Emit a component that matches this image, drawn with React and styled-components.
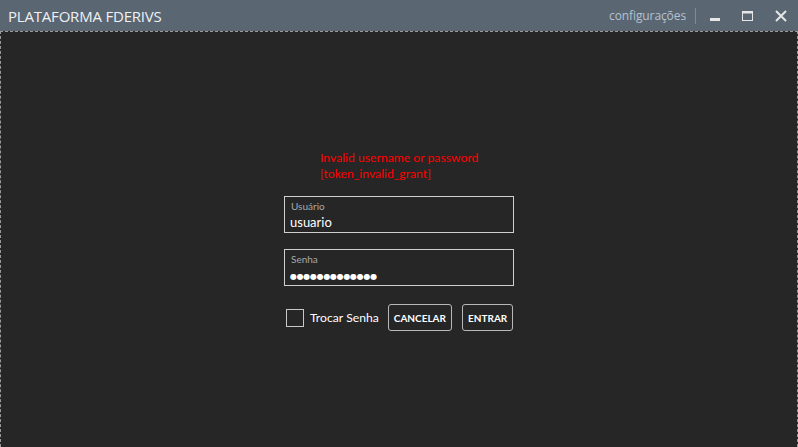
import React from "react";
import styled, { createGlobalStyle } from "styled-components";

const Global = createGlobalStyle`
  html, body { margin: 0; padding: 0; background: #262626; }
  body { font-family: "Open Sans", "Noto Sans", sans-serif; }
  * { box-sizing: border-box; }
`;

const Window = styled.div`
  width: 798px;
  height: 447px;
  display: flex;
  flex-direction: column;
  background: #262626;
`;

const TitleBar = styled.div`
  height: 31px;
  flex: none;
  background: #5a6672;
  display: flex;
  align-items: center;
  padding: 0 1px 0 8px;
`;

const Title = styled.div`
  color: #eef0f2;
  font-size: 15px;
  letter-spacing: -0.2px;
  flex: 1;
`;

const Settings = styled.div`
  color: #b4c2d0;
  font-size: 12px;
  padding-right: 9px;
  letter-spacing: -0.1px;
`;

const Sep = styled.div`
  width: 1px;
  height: 16px;
  background: #808c98;
  margin-right: 2px;
`;

const Ctrl = styled.div`
  width: 33px;
  height: 31px;
  display: flex;
  align-items: center;
  justify-content: center;
`;

const Body = styled.div`
  flex: 1;
  border: 1px dashed #9a9a9a;
  border-bottom: none;
  display: flex;
  flex-direction: column;
  align-items: center;
  padding-top: 118px;
  font-family: "Lato", "Open Sans", sans-serif;
`;

const Form = styled.div`
  width: 230px;
  display: flex;
  flex-direction: column;
`;

const Error = styled.div`
  color: #ff0000;
  font-size: 12.2px;
  line-height: 16px;
  padding-left: 36px;
  margin-bottom: 14px;
`;

const Field = styled.div`
  height: 37px;
  border: 1px solid #cfcfcf;
  padding: 3px 6px 0 6px;
  margin-bottom: 16px;
  display: flex;
  flex-direction: column;
`;

const Label = styled.div`
  color: #a8a8a8;
  font-size: 10px;
  line-height: 12px;
`;

const Value = styled.div`
  color: #ffffff;
  font-size: 13px;
  line-height: 17px;
  margin-top: 2px;
  margin-left: -1px;
`;

const Dots = styled.div`
  color: #ffffff;
  font-size: 8px;
  line-height: 17px;
  letter-spacing: -0.3px;
  margin-left: -1px;
  margin-top: 3px;
  font-family: "DejaVu Sans", sans-serif;
`;

const Actions = styled.div`
  display: flex;
  align-items: center;
  padding-left: 2px;
  margin-top: 2px;
`;

const Check = styled.div`
  width: 18px;
  height: 18px;
  flex: none;
  border: 1px solid #c8c8c8;
  margin-right: 6px;
`;

const CheckLabel = styled.div`
  color: #ffffff;
  font-size: 12.2px;
  white-space: nowrap;
  flex: none;
  margin-right: 9px;
`;

const Button = styled.div`
  height: 27px;
  padding: 0 5px;
  flex: none;
  border: 1px solid #b8b8b8;
  border-radius: 3px;
  color: #ffffff;
  font-size: 10px;
  font-weight: 700;
  display: flex;
  align-items: center;
  white-space: nowrap;
  margin-right: ${(p) => p.$mr || 0}px;
`;

export default function App() {
  return (
    <Window>
      <Global />
      <TitleBar>
        <Title>PLATAFORMA FDERIVS</Title>
        <Settings>configurações</Settings>
        <Sep />
        <Ctrl>
          <svg width="10" height="10" viewBox="0 0 10 10">
            <rect x="0" y="7" width="10" height="3" fill="#e6e6e6" />
          </svg>
        </Ctrl>
        <Ctrl>
          <svg width="11" height="10" viewBox="0 0 11 10">
            <rect x="0.5" y="0.5" width="10" height="9" fill="none" stroke="#e6e6e6" />
            <rect x="0" y="0" width="11" height="2.5" fill="#e6e6e6" />
          </svg>
        </Ctrl>
        <Ctrl>
          <svg width="12" height="12" viewBox="0 0 12 12">
            <path d="M1 1 L11 11 M11 1 L1 11" stroke="#e6e6e6" strokeWidth="2" />
          </svg>
        </Ctrl>
      </TitleBar>
      <Body>
        <Form>
          <Error>
            Invalid username or password
            <br />
            [token_invalid_grant]
          </Error>
          <Field>
            <Label>Usuário</Label>
            <Value>usuario</Value>
          </Field>
          <Field>
            <Label>Senha</Label>
            <Dots>●●●●●●●●●●●●●</Dots>
          </Field>
          <Actions>
            <Check />
            <CheckLabel>Trocar Senha</CheckLabel>
            <Button $mr={10}>CANCELAR</Button>
            <Button>ENTRAR</Button>
          </Actions>
        </Form>
      </Body>
    </Window>
  );
}
